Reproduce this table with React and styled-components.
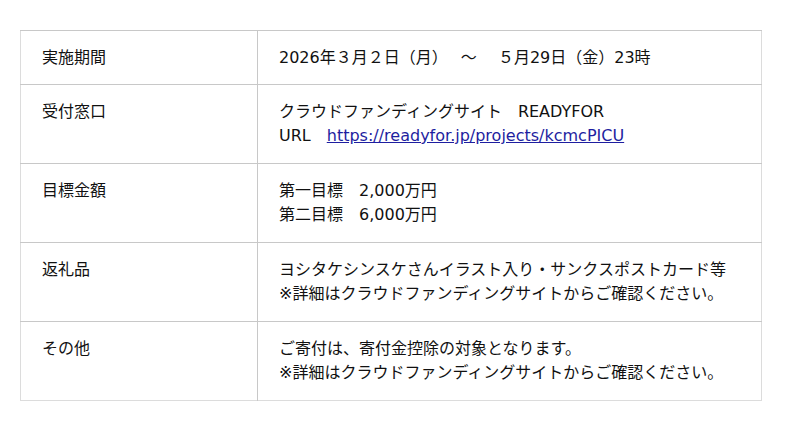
import React from "react";
import styled, { createGlobalStyle } from "styled-components";

const GlobalStyle = createGlobalStyle`
  html, body {
    margin: 0;
    padding: 0;
    background: #fff;
  }
  body {
    font-family: "DejaVu Sans", "Noto Sans CJK JP", sans-serif;
    color: #111;
  }
`;

const Page = styled.div`
  padding: 30px 39px 0 20px;
`;

const Table = styled.table`
  width: 742px;
  border-collapse: collapse;
  border: 1px solid #dcdcdc;
  font-size: 16px;
  line-height: 24px;
`;

const Row = styled.tr`
  height: ${(p) => (p.tall ? "79px" : "54px")};
`;

const HeadCell = styled.td`
  width: 215px;
  padding: 15px 0 0 21px;
  vertical-align: top;
  border-top: 1px solid #c8c8c8;
  border-right: 1px solid #c8c8c8;
`;

const Cell = styled.td`
  padding: 15px 10px 0 21px;
  vertical-align: top;
  border-top: 1px solid #c8c8c8;
`;

const Link = styled.a`
  color: #1e1ea0;
  text-decoration: underline;
`;

const rows = [
  { label: "実施期間", lines: ["2026年３月２日（月）　 ～　 ５月29日（金）23時"] },
  {
    label: "受付窓口",
    lines: [
      "クラウドファンディングサイト　READYFOR",
      <>
        URL　<Link href="#">https://readyfor.jp/projects/kcmcPICU</Link>
      </>,
    ],
  },
  { label: "目標金額", lines: ["第一目標　2,000万円", "第二目標　6,000万円"] },
  {
    label: "返礼品",
    lines: [
      "ヨシタケシンスケさんイラスト入り・サンクスポストカード等",
      "※詳細はクラウドファンディングサイトからご確認ください。",
    ],
  },
  {
    label: "その他",
    lines: [
      "ご寄付は、寄付金控除の対象となります。",
      "※詳細はクラウドファンディングサイトからご確認ください。",
    ],
  },
];

export default function App() {
  return (
    <>
      <GlobalStyle />
      <Page>
        <Table>
          <tbody>
            {rows.map((r) => (
              <Row key={r.label} tall={r.lines.length > 1}>
                <HeadCell>{r.label}</HeadCell>
                <Cell>
                  {r.lines.map((l, i) => (
                    <div key={i}>{l}</div>
                  ))}
                </Cell>
              </Row>
            ))}
          </tbody>
        </Table>
      </Page>
    </>
  );
}
